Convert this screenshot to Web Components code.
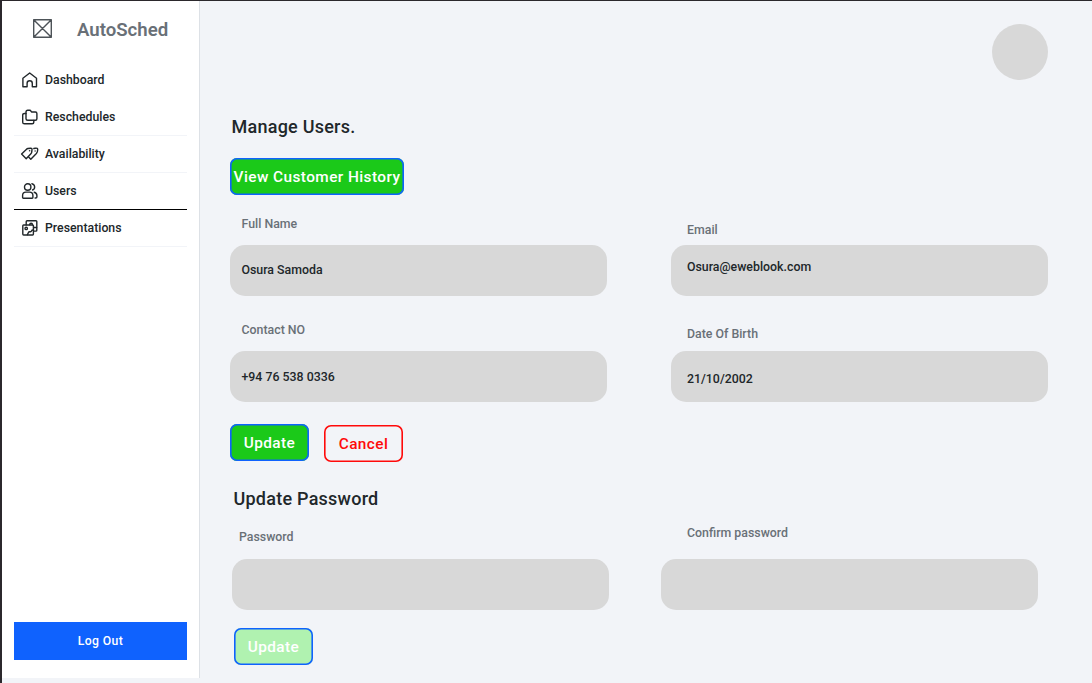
<!DOCTYPE html>
<html lang="en">
<head>
<meta charset="utf-8">
<title>AutoSched</title>
<style>
html,body{margin:0;height:100%;background:#f2f4f8}
body{font-family:Roboto,"Liberation Sans",sans-serif;color:#21272a;overflow:hidden}
</style>
</head>
<body>
<auto-app></auto-app>
<script>
const define=(name,html,setup)=>customElements.define(name,class extends HTMLElement{
  static observedAttributes=['name'];
  constructor(){
    super();
    const t=document.createElement('template');
    t.innerHTML=html;
    this.attachShadow({mode:'open'}).append(t.content.cloneNode(true));
  }
  connectedCallback(){ if(setup) setup(this,this.shadowRoot); }
  attributeChangedCallback(){ if(setup) setup(this,this.shadowRoot); }
});

const icons={
  home:'<path d="M.9 6.200 7.700 1l6.800 5.200v8.600h-4.200v-3.400a2.600 2.600 0 0 0-5.200 0v3.400H.9z"/>',
  folders:'<path d="M4 3q0-1.700 1.700-1.700h2q.9 0 1.300.8l.5.900h3.900q1.500 0 1.500 1.500v5.300q0 1.500-1.500 1.500H5.700Q4 11.300 4 9.800z"/><path d="M4 4.500H2.500Q.7 4.500.7 6v7.200q0 1.600 1.800 1.600h7.700q1.600 0 1.600-1.500v-1.800"/>',
  tags:'<path d="M-.4 8.100 4.300 3.400q.8-.8 1.700-.9l2.600-.3q1.600-.1 1.400 1.500l-.3 2.500q-.1.900-.8 1.600L4.200 12.800z"/><path d="m11.800 2.500 1.600-.3q2.400-.3 2.300 1.500-.1 2.500-1.300 3.800l-5.600 5.800-2-2.100"/><circle cx="7.600" cy="4.800" r=".8" fill="currentColor" stroke="none"/><circle cx="13.100" cy="5" r=".7" fill="currentColor" stroke="none"/>',
  users:'<circle cx="5.700" cy="4" r="3.200"/><path d="M.6 14.500v-1.900q0-3.500 3.300-3.500h3.700q3.300 0 3.300 3.500v1.900q0 .7-.7.700H1.400q-.8 0-.8-.7zM9.900.7a3.300 3.300 0 0 1 .7 6.300M12.200 9.200q2.700.7 2.700 3.300v1.600q0 .9-1.200.9h-.6"/>',
  slides:'<path d="M4.200 4.900V1.700Q4.200.8 5.100.8h8.900q.8 0 .8.8v8.600q0 .9-.9.9h-1.900"/><path d="M1.600 5h9q.8 0 .8.800v8.300q0 .9-.8.900h-9q-.8 0-.8-.9V5.800q0-.8.8-.8z"/><circle cx="4.200" cy="8.400" r="1.200"/><path d="m5.400 14.700.9-2q.4-.9 1.300-.9h.9q.8-.1 1-.9.300-.9 1.700-.9M7.700 4.700a1.400 1.400 0 0 1 2.800 0M11.800 7.500h2.800"/>',
  cross:'<path d="M.7.7h17.600v17.600H.7zM.7.7l17.600 17.600M18.300.7.7 18.300"/>'
};

define('app-icon',`<style>:host{display:block;flex:none;width:16px;height:16px}svg{display:block;width:100%;height:100%;overflow:visible;fill:none;stroke:currentColor;stroke-width:1.4;stroke-linejoin:round;stroke-linecap:round}</style><svg></svg>`,
 (h,r)=>{const n=h.getAttribute('name');if(!n)return;const s=r.querySelector('svg');s.setAttribute('viewBox',n==='cross'?'0 0 19 19':'0 0 16 16');s.innerHTML=icons[n];});

define('nav-item',`<style>
:host{display:flex;box-sizing:border-box;height:37px;align-items:center;padding-left:8px;border-bottom:1px solid #f2f4f8;font-size:12.3px;font-weight:500;color:#21272a}
:host([first]){border-color:transparent}
:host([active]){border-color:#000}
.t{margin-left:7px;white-space:nowrap}
</style><app-icon></app-icon><span class="t"><slot></slot></span>`,
 (h,r)=>{r.querySelector('app-icon').setAttribute('name',h.getAttribute('icon'));});

define('app-sidebar',`<style>
:host{display:flex;flex-direction:column;box-sizing:border-box;width:198px;height:677px;background:#fff;border-right:1px solid #dde1e6}
header{display:flex;height:61px;padding:18px 0 0 30.500px;box-sizing:border-box;color:#697077}
header app-icon{width:19px;height:19px;color:#4d5358}
h1{margin:0 0 0 25.500px;font-size:18.600px;line-height:23px;font-weight:600}
nav{margin:0 12px;flex:1}
button{margin:0 12px 18px;height:38px;border:0;background:#0f62fe;color:#fff;font:500 12.200px Roboto,sans-serif;letter-spacing:.4px;padding:0}
</style><header><app-icon name="cross"></app-icon><h1>AutoSched</h1></header>
<nav><nav-item first icon="home">Dashboard</nav-item><nav-item icon="folders">Reschedules</nav-item><nav-item icon="tags">Availability</nav-item><nav-item active icon="users">Users</nav-item><nav-item icon="slides">Presentations</nav-item></nav>
<button>Log Out</button>`);

define('app-button',`<style>
:host{display:block;flex:none;width:79px}
button{display:block;box-sizing:border-box;width:100%;height:37px;padding:0;border:0;box-shadow:inset 0 0 0 1.600px var(--edge,#0f62fe);border-radius:7px;background:#1bc919;color:#fff;font:500 15.400px Roboto,sans-serif;letter-spacing:.42px;white-space:nowrap}
:host([wide]){width:174px}
:host([kind=cancel]){--edge:#ff0a0a}
:host([kind=cancel]) button{background:transparent;color:#ff0a0a}
:host([muted]) button{background:#b0f2b0}
</style><button><slot></slot></button>`);

define('form-field',`<style>
:host{display:block;width:377.500px;font-size:12.350px;line-height:16px;font-weight:500}
.l{box-sizing:border-box;color:#697077;height:var(--gap,30px);padding:var(--ly,1px) 0 0 var(--lx,12px)}
.b{box-sizing:border-box;height:51px;border-radius:15px;background:#d8d8d8;padding:var(--vy,17px) 0 0 var(--lx,12px)}
</style><div class="l"><slot name="label"></slot></div><div class="b"><slot></slot></div>`);

define('users-page',`<style>
:host{display:flex;flex-direction:column;flex:1;padding-left:29.500px;box-sizing:border-box}
.top{height:113px;display:flex;justify-content:flex-end;padding:23px 44px 0 0;box-sizing:border-box}
.avatar{width:56px;height:56px;border-radius:50%;background:#d8d8d8}
h2{margin:0;font-size:18px;line-height:26px;font-weight:500;letter-spacing:.24px}
.row{display:flex;align-items:flex-end;gap:63.500px}
</style>
<div class="top"><div class="avatar"></div></div>
<h2 style="padding-left:2px">Manage Users.</h2>
<app-button wide style="margin:18px 0 20px .5px">View Customer History</app-button>
<div class="row"><form-field><span slot="label">Full Name</span>Osura Samoda</form-field>
<form-field style="--gap:24px;--lx:16.500px;--vy:14px"><span slot="label">Email</span>Osura@eweblook.com</form-field></div>
<div class="row" style="margin-top:25px"><form-field style="--vy:18px"><span slot="label">Contact NO</span>+94 76 538 0336</form-field>
<form-field style="--gap:26px;--lx:16.500px;--vy:20px"><span slot="label">Date Of Birth</span>21/10/2002</form-field></div>
<div class="row" style="margin:22px 0 0 .5px;gap:15px;align-items:flex-start"><app-button>Update</app-button><app-button kind="cancel" style="margin-top:1px">Cancel</app-button></div>
<h2 style="margin-top:24px;padding-left:4px">Update Password</h2>
<div class="row" style="margin:13px 0 0 2px;gap:51.500px"><form-field style="--gap:30px;--lx:7.500px;--ly:0"><span slot="label">Password</span></form-field>
<form-field style="--gap:34px;--lx:26.500px;--ly:0"><span slot="label">Confirm password</span></form-field></div>
<app-button muted style="margin:18px 0 0 4.500px">Update</app-button>`);

define('auto-app',`<style>
:host{display:flex;box-sizing:border-box;width:1092px;height:683px;border-top:1px solid #2b282c;border-left:2px solid #2b282c;background:#f2f4f8;overflow:hidden}
</style><app-sidebar></app-sidebar><users-page></users-page>`);
</script>
</body>
</html>
